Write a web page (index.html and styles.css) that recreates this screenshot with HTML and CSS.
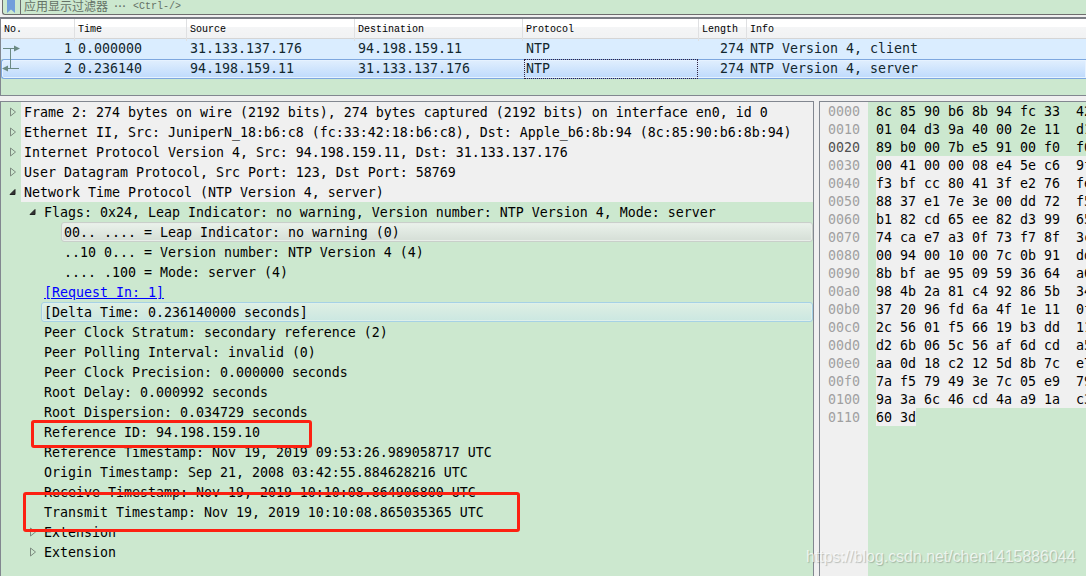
FILE: index.html
```html
<!DOCTYPE html>
<html lang="en">
<head>
<meta charset="utf-8">
<title>Packet capture</title>
<link rel="stylesheet" href="styles.css">
</head>
<body>
<div class="filter">
  <div class="filter-box">
    <svg class="bookmark" width="8" height="13" viewBox="0 0 8 13"><path d="M0 0H8V13L4 9.5L0 13Z" fill="#729fdb"/></svg>
    <span class="filter-hint"><span class="cjk">应用显示过滤器</span><span class="dots">···</span><span>&lt;Ctrl-/&gt;</span></span>
  </div>
</div>
<div class="packets">
  <div class="cols head"><span>No.</span><span>Time</span><span>Source</span><span>Destination</span><span>Protocol</span><span>Length</span><span>Info</span></div>
  <div class="cols row"><span class="num">1</span><span>0.000000</span><span>31.133.137.176</span><span>94.198.159.11</span><span>NTP</span><span class="num">274</span><span>NTP Version 4, client</span></div>
  <div class="cols row selected"><span class="num">2</span><span>0.236140</span><span>94.198.159.11</span><span>31.133.137.176</span><span class="focus">NTP</span><span class="num">274</span><span>NTP Version 4, server</span></div>
  <svg class="flow" width="20" height="28" viewBox="0 0 20 28"><path d="M2 6.5H14M9.5 6V27M4 26.5H18" fill="none" stroke="#6b8a83"/><path d="M13 3.5L19 6.5L13 9.5ZM7 23.500L1 26.5L7 29.5Z" fill="#6b8a83"/></svg>
</div>
<div class="panes">
  <div class="tree">
    <div class="node proto"><svg class="arrow" viewBox="0 0 8 10"><path d="M1.500 1V9L6.500 5Z"/></svg><span>Frame 2: 274 bytes on wire (2192 bits), 274 bytes captured (2192 bits) on interface en0, id 0</span></div>
    <div class="node proto"><svg class="arrow" viewBox="0 0 8 10"><path d="M1.500 1V9L6.500 5Z"/></svg><span>Ethernet II, Src: JuniperN_18:b6:c8 (fc:33:42:18:b6:c8), Dst: Apple_b6:8b:94 (8c:85:90:b6:8b:94)</span></div>
    <div class="node proto"><svg class="arrow" viewBox="0 0 8 10"><path d="M1.500 1V9L6.500 5Z"/></svg><span>Internet Protocol Version 4, Src: 94.198.159.11, Dst: 31.133.137.176</span></div>
    <div class="node proto"><svg class="arrow" viewBox="0 0 8 10"><path d="M1.500 1V9L6.500 5Z"/></svg><span>User Datagram Protocol, Src Port: 123, Dst Port: 58769</span></div>
    <div class="node proto"><svg class="arrow open" viewBox="0 0 8 10"><path d="M6 2.500V7.500H1Z"/></svg><span>Network Time Protocol (NTP Version 4, server)</span></div>
    <div class="node l1"><svg class="arrow open" viewBox="0 0 8 10"><path d="M6 2.500V7.500H1Z"/></svg><span>Flags: 0x24, Leap Indicator: no warning, Version number: NTP Version 4, Mode: server</span></div>
    <div class="node l2"><span class="current">00.. .... = Leap Indicator: no warning (0)</span></div>
    <div class="node l2"><span>..10 0... = Version number: NTP Version 4 (4)</span></div>
    <div class="node l2"><span>.... .100 = Mode: server (4)</span></div>
    <div class="node l1"><span class="link">[Request In: 1]</span></div>
    <div class="node l1"><span class="hover">[Delta Time: 0.236140000 seconds]</span></div>
    <div class="node l1"><span>Peer Clock Stratum: secondary reference (2)</span></div>
    <div class="node l1"><span>Peer Polling Interval: invalid (0)</span></div>
    <div class="node l1"><span>Peer Clock Precision: 0.000000 seconds</span></div>
    <div class="node l1"><span>Root Delay: 0.000992 seconds</span></div>
    <div class="node l1"><span>Root Dispersion: 0.034729 seconds</span></div>
    <div class="node l1"><span>Reference ID: 94.198.159.10</span></div>
    <div class="node l1"><span>Reference Timestamp: Nov 19, 2019 09:53:26.989058717 UTC</span></div>
    <div class="node l1"><span>Origin Timestamp: Sep 21, 2008 03:42:55.884628216 UTC</span></div>
    <div class="node l1"><span>Receive Timestamp: Nov 19, 2019 10:10:08.864906800 UTC</span></div>
    <div class="node l1"><span>Transmit Timestamp: Nov 19, 2019 10:10:08.865035365 UTC</span></div>
    <div class="node l1"><svg class="arrow" viewBox="0 0 8 10"><path d="M1.500 1V9L6.500 5Z"/></svg><span>Extension</span></div>
    <div class="node l1"><svg class="arrow" viewBox="0 0 8 10"><path d="M1.500 1V9L6.500 5Z"/></svg><span>Extension</span></div>
  </div>
  <div class="hex">
    <pre class="offsets">0000
0010
<b>0020</b>
0030
0040
0050
0060
0070
0080
0090
00a0
00b0
00c0
00d0
00e0
00f0
0100
0110</pre>
    <div class="dump">
      <pre>8c 85 90 b6 8b 94 fc 33  42
01 04 d3 9a 40 00 2e 11  d1
89 b0 00 7b e5 91 00 f0  f0</pre>
      <pre class="marked">00 41 00 00 08 e4 5e c6  9f
f3 bf cc 80 41 3f e2 76  fe
88 37 e1 7e 3e 00 dd 72  f5
b1 82 cd 65 ee 82 d3 99  65
74 ca e7 a3 0f 73 f7 8f  3c
00 94 00 10 00 7c 0b 91  dd
8b bf ae 95 09 59 36 64  a6
98 4b 2a 81 c4 92 86 5b  34
37 20 96 fd 6a 4f 1e 11  0f
2c 56 01 f5 66 19 b3 dd  11
d2 6b 06 5c 56 af 6d cd  a5
aa 0d 18 c2 12 5d 8b 7c  e7
7a f5 79 49 3e 7c 05 e9  79
9a 3a 6c 46 cd 4a a9 1a  c3</pre>
      <pre class="marked last">60 3d</pre>
    </div>
  </div>
</div>
<div class="callout reference-id"></div>
<div class="callout transmit-time"></div>
<div class="watermark">https://blog.csdn.net/chen1415886044</div>
</body>
</html>
```
FILE: styles.css
```css
* { box-sizing: border-box; }
body {
  margin: 0;
  width: 1086px;
  height: 576px;
  overflow: hidden;
  position: relative;
  display: flex;
  flex-direction: column;
  background: #f0f0f0;
  color: #000;
  font: 13.29px/20px "DejaVu Sans Mono", monospace;
}
pre { margin: 0; font: inherit; }
.filter { height: 17px; padding-left: 2px; flex: none; }
.filter-box {
  height: 15px;
  display: flex;
  align-items: flex-start;
  background: #cce8cf;
  border-left: 1px solid #6d6d6d;
  border-bottom: 1px solid #6d6d6d;
  border-bottom-left-radius: 3px;
}
.bookmark { margin: 0 5px 0 4px; flex: none; }
.filter-hint {
  display: flex;
  height: 14px;
  padding-left: 3px;
  border-left: 1px solid #6d6d6d;
  color: #647166;
  font: 10px/13px "Liberation Mono", monospace;
}
.cjk { font: 12px/12px "Noto Sans CJK SC", sans-serif; }
.dots { width: 25px; padding-left: 5px; letter-spacing: -2px; font-weight: bold; }
.packets {
  position: relative;
  flex: none;
  height: 79px;
  background: #cce8cf;
  border-top: 2px solid #7b7e85;
  border-bottom: 1px solid #828790;
  border-left: 1px solid #828790;
}
.cols {
  display: grid;
  grid-template-columns: 74px 112px 168px 168px 176px 48px 1fr;
  white-space: pre;
}
.head {
  height: 20px;
  font: 10px/22px "Liberation Mono", monospace;
  background: linear-gradient(#fff 0, #fff 40%, #f4f5f6 41%, #f1f2f3 100%);
  border-bottom: 1px solid #d5d5d5;
}
.head span { padding-left: 3px; border-right: 1px solid #dfe0e2; }
.head span:last-child { border: 0; }
.row { height: 20px; background: #daedff; color: #12272e; line-height: 19px; }
.row span { padding-left: 3px; }
.row .num { text-align: right; padding-right: 3px; }
.selected {
  border: 1px solid #7da7df;
  border-right: 0;
  border-radius: 3px 0 0 3px;
  background: linear-gradient(#e1effe, #bedafc);
  box-shadow: inset 0 0 0 1px #e6f2ff;
  grid-template-columns: 73px 112px 168px 168px 176px 48px 1fr;
}
.selected span { line-height: 18px; }
.selected .focus { outline: 1px dotted #302040; margin: 0 2px; padding-left: 1px; }
.flow { position: absolute; left: 0; top: 23px; overflow: visible; }
.panes {
  flex: 1;
  min-height: 0;
  margin-top: 5px;
  display: grid;
  grid-template-columns: 814px 1fr;
  column-gap: 5px;
}
.tree {
  background: #cce8cf;
  border: 1px solid #828790;
  border-bottom: 0;
  overflow: hidden;
}
.node { height: 20px; display: flex; align-items: center; white-space: pre; }
.node > span { flex: 1; height: 20px; line-height: 22px; padding-left: 3px; }
.arrow { width: 8px; height: 10px; margin: 0 4px 0 8px; fill: none; stroke: #7d8b80; flex: none; }
.arrow.open { fill: #333; stroke: #222; }
.proto > span { background: #f0f0f0; }
.l1 { padding-left: 40px; }
.l1 .arrow { margin-left: -12px; }
.l2 { padding-left: 60px; }
.node > .current, .node > .hover {
  border: 1px solid #c9cfca;
  border-radius: 3px;
  line-height: 20px;
  padding-left: 2px;
  background: linear-gradient(#eaf2eb, #d5ded6);
  box-shadow: inset 0 0 0 1px #e8eee9;
}
.node > .hover {
  border-color: #a6d1e5;
  background: linear-gradient(#deefe3, #cbe7e1);
  box-shadow: inset 0 0 0 1px #def0ea;
}
.link { color: #00f; text-decoration: underline; }
.hex {
  display: flex;
  overflow: hidden;
  background: #cce8cf;
  border-top: 1px solid #828790;
  border-left: 1px solid #828790;
  line-height: 18px;
}
/* the one-pixel top padding drops the glyphs inside their 18px bands */
.offsets { width: 48px; flex: none; padding: 1px 0 0 8px; background: #f0f0f0; color: #a0a0a0; }
.offsets b { color: #505050; font-weight: normal; }
.dump { flex: none; padding: 1px 0 0 8px; }
.marked { background: linear-gradient(#f0f0f0, #f0f0f0) 0 -1px no-repeat; box-shadow: 0 -1px #f0f0f0; }
.last { width: 40px; }
.callout { position: absolute; border: 3px solid #fc2112; border-radius: 3px; }
.reference-id { left: 31px; top: 420px; width: 281px; height: 28px; }
.transmit-time { left: 23px; top: 492px; width: 497px; height: 40px; }
.watermark {
  position: absolute;
  left: 806px;
  top: 547px;
  color: rgba(255, 255, 255, .72);
  font: 15.9px/20px "Liberation Sans", Arial, sans-serif;
  text-shadow: 1px 1px 1px rgba(100, 110, 100, .4);
  white-space: nowrap;
}
```
